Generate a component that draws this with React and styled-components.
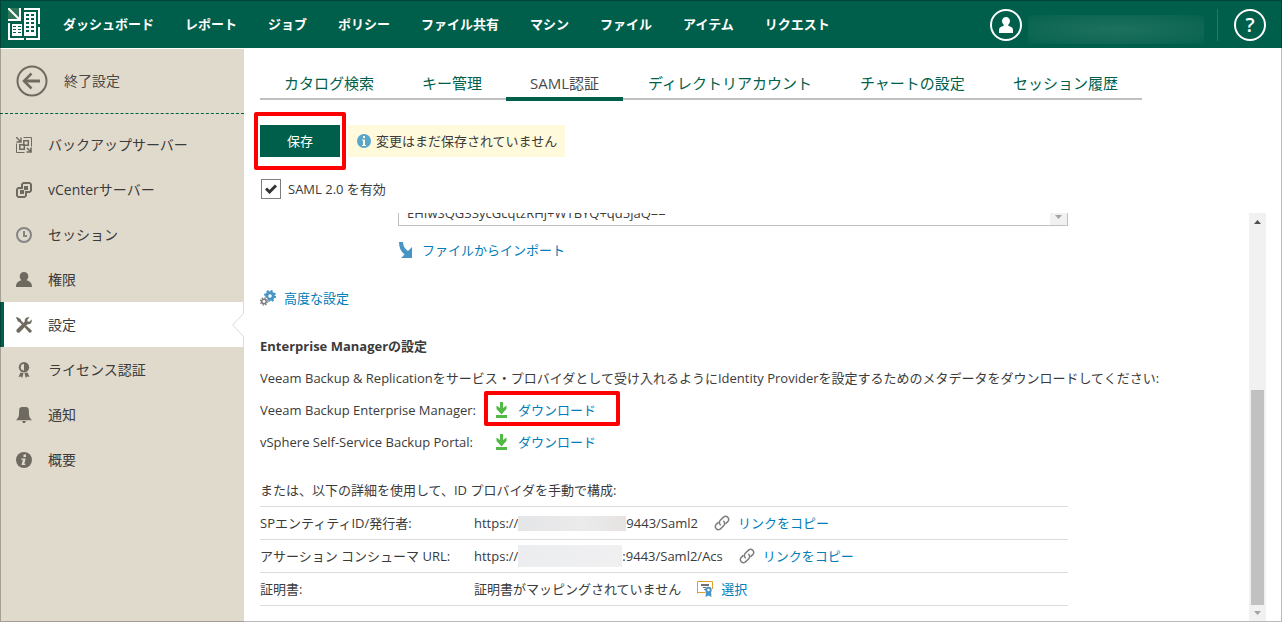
import React, { useState } from 'react'
import styled, { createGlobalStyle } from 'styled-components'

const GlobalStyle = createGlobalStyle`
  * {
    box-sizing: border-box;
  }

  body {
    margin: 0;
    background: #fff;
    color: #3b3b3b;
    font-family: "Open Sans", "Noto Sans CJK JP", sans-serif;
    font-size: 13px;
    line-height: 20px;
  }

  button, input, textarea {
    font: inherit;
  }

  a {
    text-decoration: none;
  }
`

/* ---------- icons ---------- */

const Logo = () => (
  <svg width="32" height="32" viewBox="0 0 32 32" fill="#fff" shapeRendering="crispEdges" aria-hidden="true">
    <path d="M0 0h11v11H0z" fill="#2f7556" />
    <path d="M11 0h2v13H0v-2h11z" />
    <path d="M0 0l12 12" stroke="#fff" strokeWidth="2" shapeRendering="auto" />
    <path d="M0 15h2v15h14v2H0z" />
    <path d="M16 0h16v16h-2V2H16z" />
    <path d="M30 19h2v13H18v-2h12z" />
    <path d="M16 4h12v24H16zM4 16h10v12H4z" />
    <path
      fill="#005f4b"
      d="M18 6h3v2h-3zM23 6h3v2h-3zM18 10h3v2h-3zM23 10h3v2h-3zM18 14h3v2h-3zM23 14h3v2h-3zM18 18h3v2h-3zM23 18h3v2h-3zM18 22h3v2h-3zM23 22h3v2h-3zM5 18h3v1H5zM10 18h3v1h-3zM5 21h3v1H5zM10 21h3v1h-3zM5 24h3v1H5zM10 24h3v1h-3z"
    />
  </svg>
)

const Icon = ({ children, fill = '#6f6a60' }) => (
  <svg width="16" height="16" viewBox="0 0 16 16" fill={fill} aria-hidden="true">
    {children}
  </svg>
)

const UserIcon = () => (
  <svg width="14" height="16" viewBox="0 0 14 16" fill="#fff" aria-hidden="true">
    <path d="M7 0c2.300 0 4 1.700 4 4 0 1.600-.8 2.800-1.700 3.500v1.200c2.700.8 4.700 1.600 4.700 4.300v3H0v-3c0-2.700 2-3.500 4.700-4.300V7.500C3.800 6.800 3 5.600 3 4c0-2.300 1.700-4 4-4z" />
  </svg>
)

const BackIcon = () => (
  <svg width="32" height="32" viewBox="0 0 32 32" fill="none" stroke="#6f6a60" aria-hidden="true">
    <circle cx="16" cy="16" r="14.500" strokeWidth="2" />
    <path d="M24 16H8" strokeWidth="3" />
    <path d="M15.500 8.500L8 16l7.500 7.500" strokeWidth="2.500" />
  </svg>
)

const BackupIcon = () => (
  <Icon fill="none">
    <g stroke="#6f6a60">
      <path d="M7.500.5h8v9M.5 6.500v9h8" />
      <path d="M0 0l4.500 4.500M5 .5V5H.5" strokeWidth="1.400" />
      <path d="M11 11l4 4M15 10.500V15h-4.500" strokeWidth="1.600" />
      <path d="M7.800 3.800h4.500v4.500H7.800zM3.800 7.800h4.500v4.500H3.800z" strokeWidth="1.500" />
    </g>
  </Icon>
)

const VCenterIcon = () => (
  <Icon>
    <path d="M7 0h7l2 2v7l-2 2h-3v3l-2 2H2l-2-2V7l2-2h3V2zM7.500 2L7 2.500V7H2.500L2 7.500v6l.5.500h6l.500-.5V9h4.500l.500-.5v-6l-.5-.5z" fillRule="evenodd" />
    <path d="M8 4h4v4H8zM4 8h4v4H4z" />
  </Icon>
)

const ClockIcon = () => (
  <Icon fill="none">
    <circle cx="8" cy="8" r="7" stroke="#858585" strokeWidth="2" />
    <path d="M8 4v5h3" stroke="#858585" strokeWidth="2" />
  </Icon>
)

const PersonIcon = () => (
  <Icon>
    <path d="M8 0c2.600 0 4.300 1.900 4.300 4.300 0 1.900-1 3.200-1.800 4C13.300 9 16 10.500 16 15H0c0-4.500 2.700-6 5.500-6.700-.8-.8-1.800-2.100-1.800-4C3.700 1.900 5.400 0 8 0z" />
  </Icon>
)

const ToolsIcon = () => (
  <Icon>
    <path d="M0 .5l1-.5 3.500 2 .8 1.700L9 7.400 7.400 9 3.700 5.300 2 4.500z" />
    <path d="M10.200 8.500l5.300 4.700c.7 1.500-.8 3-2.300 2.300L8.500 10.200z" />
    <path d="M13.500.5L11.300 2.700l.3 1.700 1.700.3 2.200-2.200c1 2.800-1 5.200-4 4.700L3.500 15.400c-1.500 1.200-4-.8-2.800-2.900L8.800 4.500C8.300 1.500 10.700-.5 13.500.5z" />
  </Icon>
)

const LicenseIcon = () => (
  <Icon>
    <circle cx="8" cy="5.200" r="5.200" />
    <path d="M8 2v6.400a3.200 3.200 0 0 1 0-6.400z" fill="#e0dacd" />
    <path d="M4.500 10.500l3 .7-1.300 4.800-1.400-1.500-2.300.5zM11.500 10.500l-3 .7L9.800 16l1.400-1.500 2.300.5z" />
  </Icon>
)

const BellIcon = () => (
  <Icon>
    <path d="M6 0h4c1.700 0 2.700 1 2.800 2.700l.3 5.300c.1 2.200 1.300 3.200 2.900 5.300H0C1.600 11.200 2.800 10.200 2.900 8l.3-5.300C3.300 1 4.300 0 6 0zM6 14h4l-1 2H7z" />
  </Icon>
)

const InfoIcon = ({ color = '#6f6a60', hole = '#e0dacd' }) => (
  <Icon fill={color}>
    <circle cx="8" cy="8" r="8" />
    <path fill={hole} d="M7.500 2.500h2.500v2.500H7.500zM5.500 6.500h4.200l-1.400 5.200h1.200l-.3 1.300H5.500l1.400-5.200H5.200z" />
  </Icon>
)

const NoticeIcon = () => (
  <svg width="14" height="14" viewBox="0 0 14 14" aria-hidden="true">
    <circle cx="7" cy="7" r="7" fill="#58a6cb" />
    <path fill="#fffadb" d="M6 2h2v2H6zM5 5.500h3V11h1v1H5v-1h1V6.500H5z" />
  </svg>
)

const ImportIcon = () => (
  <svg width="16" height="16" viewBox="0 0 16 16" fill="#4795c4" aria-hidden="true">
    <path d="M1 0h4c0 3.500 1.500 6.500 5 9l4-4v11H3l3.500-3.500C2.800 9.500 1 5.500 1 0z" />
  </svg>
)

const GearsIcon = () => (
  <Icon fill="none">
    <circle cx="10" cy="6" r="3.300" stroke="#4795c4" strokeWidth="3" />
    <circle cx="10" cy="6" r="5.200" stroke="#4795c4" strokeWidth="1.800" strokeDasharray="2.100 1.984" />
    <circle cx="4" cy="11.500" r="4.500" fill="#fff" />
    <circle cx="4" cy="11.500" r="2.200" stroke="#7b7b7b" strokeWidth="1.500" />
    <circle cx="4" cy="11.500" r="3.500" stroke="#7b7b7b" strokeWidth="1.400" strokeDasharray="1.400 1.349" />
  </Icon>
)

const DownloadIcon = () => (
  <Icon fill="#53b848">
    <path d="M6 0h3v6l3.500-2.500V7l-5 5.500-5-5.500V3.500L6 6zM2 13h11v3H2z" />
  </Icon>
)

const ChainIcon = () => (
  <svg width="16" height="16" viewBox="0 0 16 16" fill="none" stroke="#7d7d7d" strokeWidth="1.500" strokeLinecap="round" aria-hidden="true">
    <path d="M6.300 9.700a3.100 3.100 0 0 1 0-4.400L9.800 1.900a3.100 3.100 0 0 1 4.300 4.300l-2.200 2.200" />
    <path d="M9.700 6.300a3.100 3.100 0 0 1 0 4.400L6.200 14.100a3.100 3.100 0 0 1-4.300-4.300l2.200-2.200" />
  </svg>
)

const CertificateIcon = () => (
  <Icon>
    <path d="M.5 12.500V.5h15V8M.5 11.500h8" fill="none" stroke="#e0a030" />
    <path d="M4 3h8v2H4zM6 6h3v1H6zM7 8h2v1H7z" fill="#707070" />
    <path d="M9 10.500L8.500 16l3-1.500 3 1.500-.5-5.500z" fill="#4795c4" />
    <circle cx="11.500" cy="9" r="2.200" fill="#fff" stroke="#4795c4" strokeWidth="2" />
  </Icon>
)

const CheckMark = styled.svg`
  grid-area: 1 / 1;
  pointer-events: none;
`

/* ---------- page ---------- */

const Page = styled.div`
  position: relative;
  display: grid;
  grid-template-rows: auto 1fr;
  gap: 1px;
  height: 100vh;
  overflow: hidden;

  &::after {
    content: "";
    position: absolute;
    inset: 0;
    border: 1px solid rgba(0, 0, 0, 0.27);
    pointer-events: none;
  }
`

const Header = styled.header`
  display: flex;
  align-items: center;
  height: 48px;
  padding: 0 16px 0 8px;
  background: #005f4b;
`

const MainNav = styled.nav`
  display: flex;
  flex: 1;
  gap: 31px;
  padding-left: 23px;

  a {
    color: #fff;
    font-weight: 700;
    white-space: nowrap;
  }
`

const RoundButton = styled.button`
  display: grid;
  place-items: center;
  width: 32px;
  height: 32px;
  padding: 0;
  border: 2px solid #fff;
  border-radius: 50%;
  background: none;
  color: #fff;
  font-size: 20px;
  font-weight: 600;
  line-height: 28px;
  cursor: pointer;
`

const UserArea = styled.div`
  display: flex;
  align-items: center;
  margin-top: 2px;
`

const UserName = styled.div`
  width: 176px;
  height: 29px;
  margin: 8px 0 0 6px;
  background: radial-gradient(ellipse at center, #1c705e 0%, #116955 60%, #04614d 100%);
`

const Divider = styled.div`
  width: 1px;
  height: 32px;
  margin: 0 16px 0 13px;
  background: #26775f;
`

const Body = styled.div`
  display: grid;
  grid-template-columns: 244px minmax(0, 1fr);
  min-height: 0;
`

const Sidebar = styled.aside`
  background: #e0dacd;
  font-size: 14px;
`

const BackLink = styled.a`
  display: flex;
  align-items: center;
  gap: 16px;
  height: 65px;
  padding-left: 16px;
  border-bottom: 1px dashed #005f4b;
  color: #4c4943;
`

const SideNav = styled.nav`
  display: flex;
  flex-direction: column;
  padding-top: 8px;
`

const SideItem = styled.a`
  position: relative;
  display: flex;
  align-items: center;
  gap: 16px;
  height: 45px;
  padding-left: ${({ $active }) => ($active ? '12px' : '16px')};
  border-left: ${({ $active }) => ($active ? '4px solid #005f4b' : '0')};
  border-right: 1px solid #e0dacd;
  background: ${({ $active }) => ($active ? '#fff' : 'transparent')};
  color: #3b3b3b;
`

const Notch = styled.svg`
  position: absolute;
  top: 10px;
  right: -1px;
`

const Main = styled.main`
  display: flex;
  flex-direction: column;
  min-height: 0;
  padding: 16px 16px 1px;
`

const Tabs = styled.nav`
  display: flex;
  align-self: flex-start;
  height: 36px;
  box-shadow: inset 0 -1px #fff, inset 0 -3px #c0c0c0;
`

const Tab = styled.a`
  padding: 8px 24px 0;
  margin-right: ${({ $active }) => ($active ? '1px' : '0')};
  border-bottom: ${({ $active }) => ($active ? '4px solid #005f4b' : '0')};
  color: ${({ $active }) => ($active ? '#4a4a4a' : '#005f4b')};
  font-size: 15px;
  white-space: nowrap;
`

const Toolbar = styled.div`
  display: flex;
  gap: 8px;
  margin-top: 24px;
`

// red frame drawn over the content it points at
const Highlight = styled.div`
  position: relative;
  display: flex;

  &::after {
    content: "";
    position: absolute;
    inset: ${({ $inset }) => $inset};
    border: 4px solid #f00;
    border-radius: 2px;
    pointer-events: none;
  }
`

const SaveButton = styled.button`
  width: 80px;
  height: 32px;
  padding: 0;
  border: 0;
  background: #005f4b;
  color: #fff;
  cursor: pointer;
`

const Notice = styled.div`
  display: flex;
  align-items: center;
  gap: 5px;
  padding: 0 8px 0 9px;
  background: #fffadb;
`

const CheckLabel = styled.label`
  display: flex;
  align-items: center;
  align-self: flex-start;
  gap: 7px;
  margin: 22px 0 14px 1px;
`

const CheckBox = styled.span`
  display: grid;
  place-items: center;

  input {
    grid-area: 1 / 1;
    width: 20px;
    height: 20px;
    margin: 0;
    border: 1px solid #7d7d7d;
    background: #fff;
    appearance: none;
  }
`

const Scroller = styled.div`
  display: flex;
  flex: 1;
  min-height: 0;
`

const Content = styled.div`
  flex: 1;
  min-width: 0;
  overflow: hidden;
`

const ScrollBar = styled.div`
  display: flex;
  flex-direction: column;
  align-items: center;
  justify-content: space-between;
  width: 17px;
  padding: 7px 0 6px;
  background: #f1f1f1;
`

const Thumb = styled.div`
  width: 13px;
  height: 215px;
  margin: auto 0 6px;
  background: #c1c1c1;
`

const FieldColumn = styled.div`
  width: 670px;
  margin-left: 138px;
`

const ClippedField = styled.div`
  display: flex;
  align-items: flex-end;
  height: 13px;
  margin-bottom: 8px;
  overflow: hidden;
`

const CertificateText = styled.textarea`
  flex: 1;
  height: 24px;
  padding: 1px 8px 3px;
  border: 1px solid #c0c0c0;
  border-width: 1px 0 1px 1px;
  color: #3b3b3b;
  line-height: 18px;
  overflow: hidden;
  resize: none;
`

const FieldScroll = styled.div`
  display: flex;
  justify-content: center;
  align-items: flex-start;
  width: 18px;
  height: 24px;
  padding-top: 12px;
  border: 1px solid #c0c0c0;
  border-left: 0;
  background: #f1f1f1;
`

const Row = styled.div`
  display: flex;
  align-items: center;
  height: 32px;
  margin-top: ${({ $spaced }) => ($spaced ? '16px' : '0')};
  font-weight: ${({ $bold }) => ($bold ? 700 : 400)};
  white-space: nowrap;
`

const RowLabel = styled.span`
  width: 234px;
`

const ActionLink = styled.a`
  display: inline-flex;
  align-items: center;
  gap: 8px;
  color: #007db8;
`

const Details = styled.table`
  width: 808px;
  border-collapse: collapse;
  border-top: 1px solid #dcdcdc;

  th {
    width: 214px;
    font-weight: 400;
    text-align: left;
  }

  th, td {
    height: 33px;
    padding: 0;
    border-bottom: 1px solid #dcdcdc;
  }
`

const Value = styled.div`
  display: flex;
  align-items: center;
  gap: 16px;
`

const Url = styled.span`
  display: flex;
  align-items: center;
`

const Masked = styled.span`
  width: ${({ $tall }) => ($tall ? '104px' : '108px')};
  height: ${({ $tall }) => ($tall ? '22px' : '15px')};
  background: ${({ $tall }) =>
    $tall ? 'linear-gradient(90deg, #ecedf0, #f0f0f1)' : 'linear-gradient(90deg, #e4e5e7, #ebebec 60%, #e6e3e1)'};
`

const mainLinks = ['ダッシュボード', 'レポート', 'ジョブ', 'ポリシー', 'ファイル共有', 'マシン', 'ファイル', 'アイテム', 'リクエスト']

const sideLinks = [
  { label: 'バックアップサーバー', icon: <BackupIcon /> },
  { label: 'vCenterサーバー', icon: <VCenterIcon /> },
  { label: 'セッション', icon: <ClockIcon /> },
  { label: '権限', icon: <PersonIcon /> },
  { label: '設定', icon: <ToolsIcon />, active: true },
  { label: 'ライセンス認証', icon: <LicenseIcon /> },
  { label: '通知', icon: <BellIcon /> },
  { label: '概要', icon: <InfoIcon /> },
]

const tabs = ['カタログ検索', 'キー管理', 'SAML認証', 'ディレクトリアカウント', 'チャートの設定', 'セッション履歴']

const Arrow = ({ up, color }) => (
  <svg width="7" height="4" viewBox="0 0 7 4" fill={color} aria-hidden="true">
    <path d={up ? 'M0 4L3.500 0 7 4z' : 'M0 0h7L3.500 4z'} />
  </svg>
)

const App = () => {
  const [enabled, setEnabled] = useState(true)

  return (
    <>
      <GlobalStyle />
      <Page>
        <Header>
          <Logo />
          <MainNav>
            {mainLinks.map((label) => (
              <a href="#" key={label}>{label}</a>
            ))}
          </MainNav>
          <UserArea>
            <RoundButton aria-label="ユーザー"><UserIcon /></RoundButton>
            <UserName />
            <Divider />
            <RoundButton>?</RoundButton>
          </UserArea>
        </Header>

        <Body>
          <Sidebar>
            <BackLink href="#">
              <BackIcon />
              終了設定
            </BackLink>
            <SideNav>
              {sideLinks.map(({ label, icon, active }) => (
                <SideItem href="#" key={label} $active={active}>
                  {icon}
                  {label}
                  {active && (
                    <Notch width="12" height="26" viewBox="0 0 12 26" aria-hidden="true">
                      <path d="M12 1L.7 13 12 25" fill="#fff" stroke="#e0dacd" />
                    </Notch>
                  )}
                </SideItem>
              ))}
            </SideNav>
          </Sidebar>

          <Main>
            <Tabs>
              {tabs.map((label) => (
                <Tab href="#" key={label} $active={label === 'SAML認証'}>{label}</Tab>
              ))}
            </Tabs>

            <Toolbar>
              <Highlight $inset="-13px -6px">
                <SaveButton>保存</SaveButton>
              </Highlight>
              <Notice>
                <NoticeIcon />
                変更はまだ保存されていません
              </Notice>
            </Toolbar>

            <CheckLabel>
              <CheckBox>
                <input type="checkbox" checked={enabled} onChange={() => setEnabled(!enabled)} />
                {enabled && (
                  <CheckMark width="12" height="10" viewBox="0 0 12 10" aria-hidden="true">
                    <path d="M1 4.500l3.500 3.500L11 1.500" fill="none" stroke="#333" strokeWidth="3" />
                  </CheckMark>
                )}
              </CheckBox>
              SAML 2.0 を有効
            </CheckLabel>

            <Scroller>
              <Content>
                <FieldColumn>
                  <ClippedField>
                    <CertificateText rows={1} aria-label="証明書" defaultValue="EHIwSQG33ycGcqtzRHj+WTBYQ+qd5jaQ==" />
                    <FieldScroll><Arrow color="#a3a3a3" /></FieldScroll>
                  </ClippedField>
                  <Row>
                    <ActionLink href="#"><ImportIcon />ファイルからインポート</ActionLink>
                  </Row>
                </FieldColumn>

                <Row $spaced>
                  <ActionLink href="#"><GearsIcon />高度な設定</ActionLink>
                </Row>

                <Row $spaced $bold>Enterprise Managerの設定</Row>
                <Row>
                  Veeam Backup &amp; Replicationをサービス・プロバイダとして受け入れるようにIdentity Providerを設定するためのメタデータをダウンロードしてください:
                </Row>
                <Row>
                  <RowLabel>Veeam Backup Enterprise Manager:</RowLabel>
                  <Highlight $inset="-9px -24px -6px -10px">
                    <ActionLink href="#"><DownloadIcon />ダウンロード</ActionLink>
                  </Highlight>
                </Row>
                <Row>
                  <RowLabel>vSphere Self-Service Backup Portal:</RowLabel>
                  <ActionLink href="#"><DownloadIcon />ダウンロード</ActionLink>
                </Row>

                <Row $spaced>または、以下の詳細を使用して、ID プロバイダを手動で構成:</Row>
                <Details>
                  <tbody>
                    <tr>
                      <th scope="row">SPエンティティID/発行者:</th>
                      <td>
                        <Value>
                          <Url>https://<Masked />9443/Saml2</Url>
                          <ActionLink href="#"><ChainIcon />リンクをコピー</ActionLink>
                        </Value>
                      </td>
                    </tr>
                    <tr>
                      <th scope="row">アサーション コンシューマ URL:</th>
                      <td>
                        <Value>
                          <Url>https://<Masked $tall />:9443/Saml2/Acs</Url>
                          <ActionLink href="#"><ChainIcon />リンクをコピー</ActionLink>
                        </Value>
                      </td>
                    </tr>
                    <tr>
                      <th scope="row">証明書:</th>
                      <td>
                        <Value>
                          証明書がマッピングされていません
                          <ActionLink href="#"><CertificateIcon />選択</ActionLink>
                        </Value>
                      </td>
                    </tr>
                  </tbody>
                </Details>
              </Content>
              <ScrollBar>
                <Arrow up color="#505050" />
                <Thumb />
                <Arrow color="#a3a3a3" />
              </ScrollBar>
            </Scroller>
          </Main>
        </Body>
      </Page>
    </>
  )
}

export default App
